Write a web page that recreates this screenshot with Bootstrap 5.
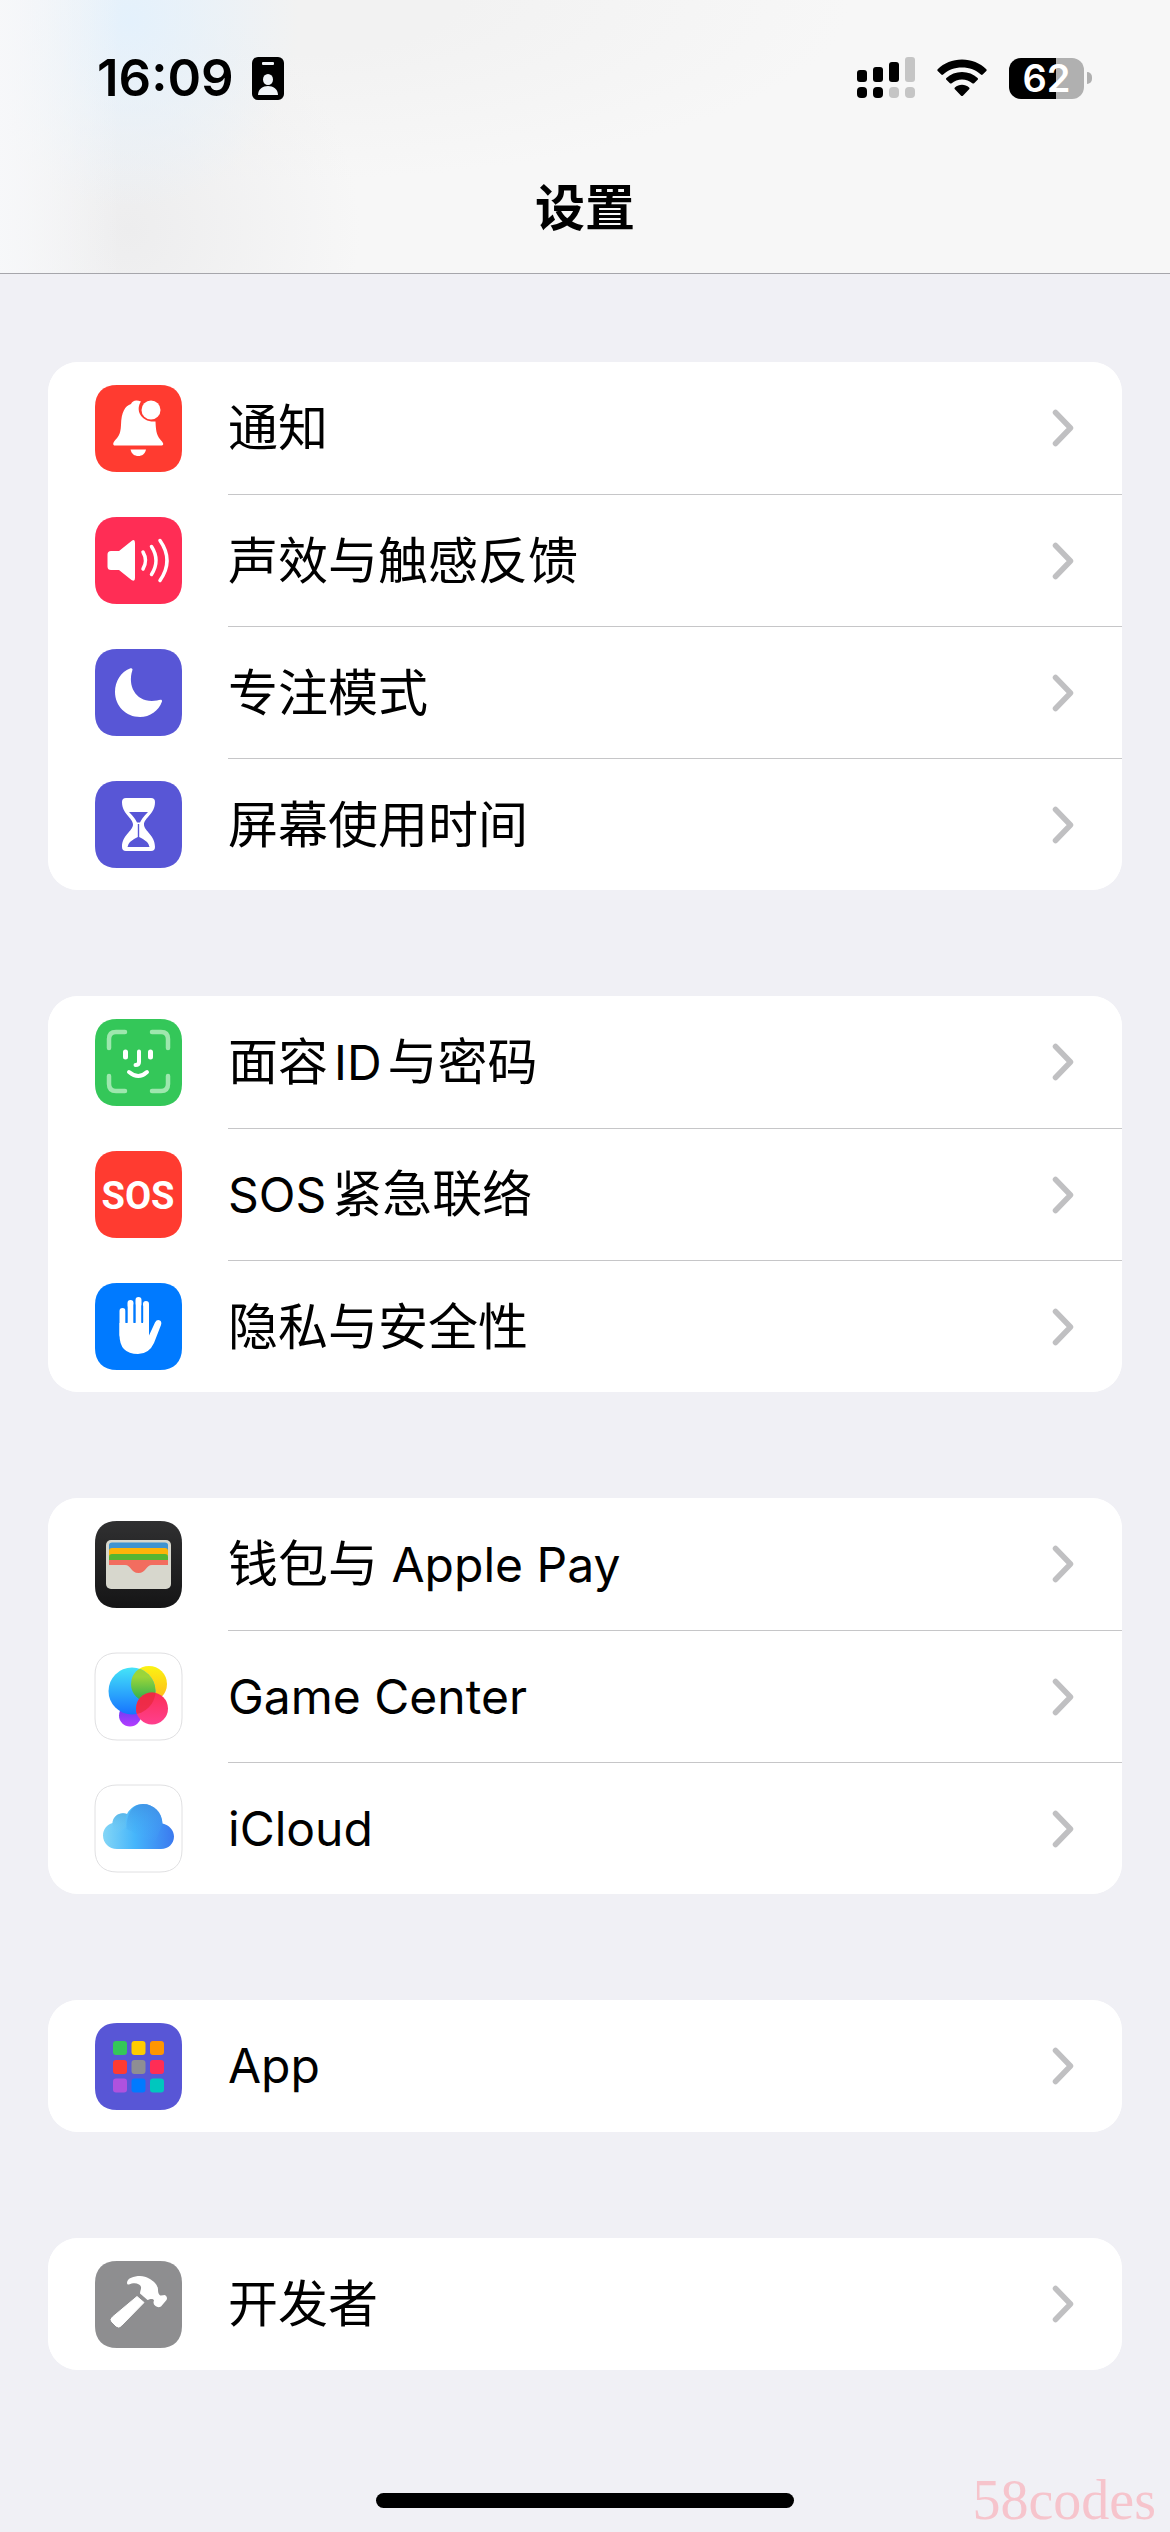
<!DOCTYPE html>
<html lang="zh-CN">
<head>
<meta charset="utf-8">
<meta name="viewport" content="width=device-width, initial-scale=1">
<title>设置</title>
<link href="https://cdn.jsdelivr.net/npm/bootstrap@5.3.0/dist/css/bootstrap.min.css" rel="stylesheet">
<style>
  body { font-family: Inter, "Noto Sans CJK SC", sans-serif; background: #f0f0f5; color: #000; }
  .topbar {
    background:
      linear-gradient(90deg, rgba(247,248,250,.95) 0, rgba(247,247,247,0) 120px),
      radial-gradient(ellipse 170px 190px at 130px 20px, #e4f1fc 0, rgba(228,241,252,0) 100%),
      radial-gradient(ellipse 230px 240px at 130px 230px, #ededee 0, rgba(237,237,238,0) 100%),
      radial-gradient(ellipse 560px 180px at 290px 0, #f2f2f2 30%, rgba(242,242,242,0) 100%),
      #f7f7f7;
    border-bottom: 1px solid #a6a6ab;
  }
  .statusbar { height: 156px; padding: 0 78px 0 97px; }
  .status-left { gap: 18px; }
  .status-right { gap: 22px; }
  .clock { font-size: 51px; font-weight: 600; line-height: 60px; }
  .battery-body { width: 75px; height: 41px; border-radius: 12px; background: linear-gradient(90deg, #000 47px, #b0b0b0 47px); color: #fff; font-size: 38px; font-weight: 600; line-height: 41px; }
  .battery-nub { width: 5px; height: 12px; margin-left: 3px; border-radius: 0 6px 6px 0; background: #b0b0b0; }
  .navtitle { font-size: 50px; font-weight: 600; line-height: 72px; margin: 0; padding: 16px 0 29px; }
  main { padding: 88px 48px 0; }
  .settings-group { border-radius: 30px; background: #fff; margin-bottom: 106px; overflow: hidden; }
  .settings-row { height: 132px; padding: 0 0 0 47px; background: #fff; color: #000; font-size: 50px; line-height: 74px; border: 0; gap: 46px; }
  .settings-row:hover, .settings-row:focus { color: #000; background: #fff; }
  .row-body { padding-right: 47px; }
  .settings-row + .settings-row .row-body { border-top: 1px solid #c6c6c8; }
  .latin { font-size: 48px; }
  .latin-before { margin-left: 6px; }
  .latin-after { margin-right: 6px; }
  .homebar { width: 418px; height: 15px; border-radius: 8px; background: #000; }
  footer { height: 56px; padding-top: 17px; }
  .stamp { right: 14px; bottom: 0; font-family: "Liberation Serif", serif; font-size: 56px; line-height: 64px; color: #f6c4cc; }
</style>
</head>
<body>
<header class="topbar">
  <div class="statusbar d-flex align-items-center justify-content-between">
    <div class="status-left d-flex align-items-center">
      <span class="clock">16:09</span>
      <svg width="32" height="43" viewBox="0 0 32 43" role="img" aria-label="ID"><rect width="32" height="43" rx="6"/><rect x="10" y="5" width="12" height="3" rx="1" fill="#f0f4f8"/><ellipse cx="16" cy="22.500" rx="5" ry="5.500" fill="#f0f4f8"/><path d="M6 38c0-6 5-9 10-9s10 3 10 9z" fill="#f0f4f8"/></svg>
    </div>
    <div class="status-right d-flex align-items-center">
      <svg width="58" height="42" viewBox="0 0 58 42" role="img" aria-label="signal"><rect y="13" width="10" height="12" rx="3"/><rect x="16" y="10" width="10" height="15" rx="3"/><rect x="32" y="5" width="10" height="20" rx="3"/><rect x="48" width="10" height="25" rx="3" fill="#c5c5c5"/><rect y="30" width="10" height="11" rx="4"/><rect x="16" y="30" width="10" height="11" rx="4"/><rect x="32" y="30" width="10" height="11" rx="4" fill="#c5c5c5"/><rect x="48" y="30" width="10" height="11" rx="4" fill="#c5c5c5"/></svg>
      <svg width="50" height="38" viewBox="0 0 50 38" role="img" aria-label="Wi-Fi"><path d="M0.700 10.200C7 4 15.500 0.500 25 0.500s18 3.500 24.300 9.700q.8.900 0 1.800l-3.600 3.600q-.9.800-1.800 0C39 11 32.500 8.500 25 8.500S11 11 6.100 15.600q-.9.800-1.800 0L.7 12q-.8-.9 0-1.800zM9.400 19C13.500 15 19 13 25 13s11.500 2 15.600 6q.8.900 0 1.800l-3.500 3.400q-.9.800-1.800 0C32.500 21.700 29 20.400 25 20.400s-7.500 1.300-10.300 3.800q-.9.800-1.800 0l-3.500-3.400q-.8-.9 0-1.800zM17.900 28.500c2-1.900 4.500-2.800 7.100-2.800s5.100.9 7.100 2.800q.8.900 0 1.800l-6.200 6.400q-.9.800-1.800 0l-6.200-6.400q-.8-.9 0-1.800z"/></svg>
      <div class="d-flex align-items-center"><div class="battery-body text-center">62</div><div class="battery-nub"></div></div>
    </div>
  </div>
  <h1 class="navtitle text-center">设置</h1>
</header>

<svg width="0" height="0" class="d-block" aria-hidden="true">
  <defs>
    <symbol id="chev" viewBox="0 0 22 38"><path d="M3.500 3.500 18.500 19 3.500 34.500" fill="none" stroke="#c0c0c2" stroke-width="5.500" stroke-linecap="round" stroke-linejoin="round"/></symbol>
    <path id="tile" d="M22 0H65C79 0 87 8 87 22V65C87 79 79 87 65 87H22C8 87 0 79 0 65V22C0 8 8 0 22 0Z"/>
    <linearGradient id="wal" x2="0" y2="1"><stop stop-color="#303031"/><stop offset="1" stop-color="#151516"/></linearGradient>
    <linearGradient id="gblue" x2="0" y2="1"><stop stop-color="#45e4f8"/><stop offset="1" stop-color="#1673ff"/></linearGradient>
    <linearGradient id="gyel" x2="0" y2="1"><stop stop-color="#fbf313"/><stop offset="1" stop-color="#ffb51c"/></linearGradient>
    <linearGradient id="ggrn" x2="0" y2="1"><stop offset=".2" stop-color="#9bd53a"/><stop offset=".8" stop-color="#17a653"/></linearGradient>
    <linearGradient id="gpink" x2="0" y2="1"><stop stop-color="#fb2f55"/><stop offset="1" stop-color="#ff3f8e"/></linearGradient>
    <linearGradient id="gpur" x2="0" y2="1"><stop stop-color="#5a3df0"/><stop offset="1" stop-color="#b53cff"/></linearGradient>
    <linearGradient id="icl"><stop stop-color="#84d6f6"/><stop offset=".45" stop-color="#45b5fb"/><stop offset="1" stop-color="#3b79ef"/></linearGradient>
    <linearGradient id="icl2" x2="0" y2="1"><stop stop-color="#3f8fe0"/><stop offset="1" stop-color="#46b4fb" stop-opacity="0"/></linearGradient>
    <linearGradient id="icl3" x2="0" y2="1"><stop stop-color="#58b2e2"/><stop offset="1" stop-color="#7cd0f6" stop-opacity="0"/></linearGradient>
    <clipPath id="gyc"><circle cx="54" cy="31" r="18"/></clipPath>
    <clipPath id="gbc"><circle cx="37" cy="38" r="23.500"/></clipPath>
  </defs>
</svg>

<main>
  <nav class="settings-group list-group list-group-flush">
    <a href="#" class="settings-row list-group-item list-group-item-action d-flex align-items-stretch">
      <svg class="align-self-center flex-shrink-0" width="87" height="87" viewBox="0 0 87 87" aria-hidden="true"><use href="#tile" fill="#ff3b30"/><path d="M20 60.500C17.500 60.500 18 58 19.500 56 23 52 25.500 50 26 40 26.300 27 30 21 36 19 37.500 15.500 41 14.500 46 16.500 40 25 46 37.500 60.500 36.500 61 48 62 51 67 56.500 69 59 68.500 60.500 66 60.500Z" fill="#fff"/><path d="M35.500 64.500h15.500c-1 4.500-4 6.500-7.700 6.500s-6.800-2-7.800-6.500z" fill="#fff"/><circle cx="56" cy="25" r="9.500" fill="#fff"/></svg>
      <span class="row-body flex-grow-1 d-flex align-items-center justify-content-between"><span>通知</span><svg width="24" height="38"><use href="#chev"/></svg></span>
    </a>
    <a href="#" class="settings-row list-group-item list-group-item-action d-flex align-items-stretch">
      <svg class="align-self-center flex-shrink-0" width="87" height="87" viewBox="0 0 87 87" aria-hidden="true"><use href="#tile" fill="#ff2d55"/><path d="M16 34H24L36.500 24Q40 21.500 40 26V61Q40 65 36.500 63L24 53H16Q12.500 53 12.500 49.500V37.500Q12.500 34 16 34Z" fill="#fff"/><path d="M48 35q5 8.500 0 17M56.500 29.500q9 14 0 28M65 23.500q14 20 0 40" fill="none" stroke="#fff" stroke-width="3.500" stroke-linecap="round"/></svg>
      <span class="row-body flex-grow-1 d-flex align-items-center justify-content-between"><span>声效与触感反馈</span><svg width="24" height="38"><use href="#chev"/></svg></span>
    </a>
    <a href="#" class="settings-row list-group-item list-group-item-action d-flex align-items-stretch">
      <svg class="align-self-center flex-shrink-0" width="87" height="87" viewBox="0 0 87 87" aria-hidden="true"><use href="#tile" fill="#5856d6"/><path d="M35 19.500C37 18.800 38 20 37.300 21.500 32 38 42 55 62 51.500 65 50.500 67.500 50 67 52.500 63.500 62 55 68 45 68 31 68 20 57 20 43 20 32 26 23 35 19.500Z" fill="#fff"/></svg>
      <span class="row-body flex-grow-1 d-flex align-items-center justify-content-between"><span>专注模式</span><svg width="24" height="38"><use href="#chev"/></svg></span>
    </a>
    <a href="#" class="settings-row list-group-item list-group-item-action d-flex align-items-stretch">
      <svg class="align-self-center flex-shrink-0" width="87" height="87" viewBox="0 0 87 87" aria-hidden="true"><use href="#tile" fill="#5856d6"/><path d="M31 17H56Q60 17 60 21C60 33 49 37 49 43.500S60 54 60 66Q60 70 56 70H31Q27 70 27 66C27 54 38 50 38 43.500S27 33 27 21Q27 17 31 17Z" fill="#fff"/><path d="M34 31H53Q47 37 45 41.500H42Q40 37 34 31ZM42.800 43h1.400V56Q54 60.500 54.500 66H32.500Q33 60.500 42.800 56Z" fill="#5856d6"/></svg>
      <span class="row-body flex-grow-1 d-flex align-items-center justify-content-between"><span>屏幕使用时间</span><svg width="24" height="38"><use href="#chev"/></svg></span>
    </a>
  </nav>

  <nav class="settings-group list-group list-group-flush">
    <a href="#" class="settings-row list-group-item list-group-item-action d-flex align-items-stretch">
      <svg class="align-self-center flex-shrink-0" width="87" height="87" viewBox="0 0 87 87" aria-hidden="true"><use href="#tile" fill="#34c759"/><path d="M14 29V20Q14 13 21 13H30M57 13H66Q73 13 73 20V29M73 57V65Q73 72 66 72H57M30 72H21Q14 72 14 65V57" fill="none" stroke="#9ee7ae" stroke-width="4.500" stroke-linecap="round"/><path d="M30.500 33V38M55.500 33V38" stroke="#fff" stroke-width="5" stroke-linecap="round"/><path d="M44 32.500V43Q44 46 40.500 46M34 53Q43.500 61 52 53" fill="none" stroke="#fff" stroke-width="4" stroke-linecap="round"/></svg>
      <span class="row-body flex-grow-1 d-flex align-items-center justify-content-between"><span>面容<span class="latin latin-before latin-after">ID</span>与密码</span><svg width="24" height="38"><use href="#chev"/></svg></span>
    </a>
    <a href="#" class="settings-row list-group-item list-group-item-action d-flex align-items-stretch">
      <svg class="align-self-center flex-shrink-0" width="87" height="87" viewBox="0 0 87 87" aria-hidden="true"><use href="#tile" fill="#ff3b30"/><text x="43" y="58" text-anchor="middle" font-family="'Liberation Sans Narrow', Roboto, sans-serif" font-weight="700" font-size="38" fill="#fff">SOS</text></svg>
      <span class="row-body flex-grow-1 d-flex align-items-center justify-content-between"><span><span class="latin latin-after">SOS</span>紧急联络</span><svg width="24" height="38"><use href="#chev"/></svg></span>
    </a>
    <a href="#" class="settings-row list-group-item list-group-item-action d-flex align-items-stretch">
      <svg class="align-self-center flex-shrink-0" width="87" height="87" viewBox="0 0 87 87" aria-hidden="true"><use href="#tile" fill="#007aff"/><path d="M27.500 28V52M35.500 20V45M43.500 17V45M51 21V45" stroke="#fff" stroke-width="6" stroke-linecap="round"/><path d="M24.500 40H54V52.500L60 39.500Q62 36 65 37.500 67 39 66 42L59 60Q54 71 43 71 24.500 71 24.500 52Z" fill="#fff"/><path d="M31.500 24V39M39.500 22V39M47.300 23V39" stroke="#007aff" stroke-width="1.800" stroke-linecap="round"/></svg>
      <span class="row-body flex-grow-1 d-flex align-items-center justify-content-between"><span>隐私与安全性</span><svg width="24" height="38"><use href="#chev"/></svg></span>
    </a>
  </nav>

  <nav class="settings-group list-group list-group-flush">
    <a href="#" class="settings-row list-group-item list-group-item-action d-flex align-items-stretch">
      <svg class="align-self-center flex-shrink-0" width="87" height="87" viewBox="0 0 87 87" aria-hidden="true"><use href="#tile" fill="url(#wal)"/><rect x="11" y="19" width="65" height="49" rx="5" fill="#d7d7cd"/><path d="M14 30V24q0-2.500 3-2.500H70q3 0 3 2.500v6z" fill="#3f94d1"/><path d="M14 35v-5q0-3 3-3H70q3 0 3 3v5z" fill="#fdb409"/><path d="M14 40v-4q0-3 3-3H70q3 0 3 3v4z" fill="#55b532"/><path d="M14 44v-5H73v5H57C51 44 51 52 43.500 52S36 44 30 44z" fill="#f26d5f"/></svg>
      <span class="row-body flex-grow-1 d-flex align-items-center justify-content-between"><span>钱包与<span class="latin"> Apple Pay</span></span><svg width="24" height="38"><use href="#chev"/></svg></span>
    </a>
    <a href="#" class="settings-row list-group-item list-group-item-action d-flex align-items-stretch">
      <svg class="align-self-center flex-shrink-0 overflow-visible" width="87" height="87" viewBox="0 0 87 87" aria-hidden="true"><use href="#tile" fill="#fff" stroke="#e0e0e2"/><circle cx="35" cy="62.500" r="11" fill="url(#gpur)"/><circle cx="54" cy="31" r="18" fill="url(#gyel)"/><circle cx="37" cy="38" r="23.500" fill="url(#gblue)"/><circle cx="37" cy="38" r="23.500" fill="url(#ggrn)" clip-path="url(#gyc)"/><circle cx="57" cy="55.500" r="16" fill="url(#gpink)"/><circle cx="57" cy="55.500" r="16" fill="#e8283a" fill-opacity=".7" clip-path="url(#gbc)"/></svg>
      <span class="row-body flex-grow-1 d-flex align-items-center justify-content-between"><span class="latin">Game Center</span><svg width="24" height="38"><use href="#chev"/></svg></span>
    </a>
    <a href="#" class="settings-row list-group-item list-group-item-action d-flex align-items-stretch">
      <svg class="align-self-center flex-shrink-0 overflow-visible" width="87" height="87" viewBox="0 0 87 87" aria-hidden="true"><use href="#tile" fill="#fff" stroke="#e0e0e2"/><path d="M22 64C14 64 8 58 8 50.500 8 44.500 12 39.500 17.500 38 18 31 25 26.500 32 29 35 23 41 19 48 19 58.500 19 67 27 67.500 38.500 74 40 79 45 79 51.500 79 58.500 73.500 64 66 64Z" fill="url(#icl)"/><path d="M17.500 38C18 31 25 26.500 32 29Q29.500 34 31.500 42L20 50Z" fill="url(#icl3)" fill-opacity=".7"/><path d="M31.500 44C31 30 37 19 48 19 58.500 19 67 27 67.500 38.500L60 58Z" fill="url(#icl2)" fill-opacity=".7"/></svg>
      <span class="row-body flex-grow-1 d-flex align-items-center justify-content-between"><span class="latin">iCloud</span><svg width="24" height="38"><use href="#chev"/></svg></span>
    </a>
  </nav>

  <nav class="settings-group list-group list-group-flush">
    <a href="#" class="settings-row list-group-item list-group-item-action d-flex align-items-stretch">
      <svg class="align-self-center flex-shrink-0" width="87" height="87" viewBox="0 0 87 87" aria-hidden="true"><use href="#tile" fill="#5856d6"/><rect x="18" y="18" width="14" height="14" rx="3" fill="#34c759"/><rect x="36.500" y="18" width="14" height="14" rx="3" fill="#ffcc00"/><rect x="55" y="18" width="14" height="14" rx="3" fill="#ff9500"/><rect x="18" y="37" width="14" height="14" rx="3" fill="#ff3b30"/><rect x="36.500" y="37" width="14" height="14" rx="3" fill="#8e8e93"/><rect x="55" y="37" width="14" height="14" rx="3" fill="#ff2d55"/><rect x="18" y="55.500" width="14" height="14" rx="3" fill="#af52de"/><rect x="36.500" y="55.500" width="14" height="14" rx="3" fill="#007aff"/><rect x="55" y="55.500" width="14" height="14" rx="3" fill="#00c7be"/></svg>
      <span class="row-body flex-grow-1 d-flex align-items-center justify-content-between"><span class="latin">App</span><svg width="24" height="38"><use href="#chev"/></svg></span>
    </a>
  </nav>

  <nav class="settings-group list-group list-group-flush">
    <a href="#" class="settings-row list-group-item list-group-item-action d-flex align-items-stretch">
      <svg class="align-self-center flex-shrink-0" width="87" height="87" viewBox="0 0 87 87" aria-hidden="true"><use href="#tile" fill="#8e8e90"/><path d="M42 35.500 49 41.500 26.500 64.500Q24 67.500 21 65L17 61Q14.500 58.500 17.500 56Z" fill="#fff" stroke="#fff" stroke-linejoin="round"/><path d="M32 22C32 17 39 15 45 15 52 15 57 19 60 22Q63 25 63 28.500C63 32 64 34.500 66 34.500L70 34Q73 36 71.500 39L66 45.500Q63 47 60.500 45Q57.500 43 59 39.500C58 37 55 38 52.500 39L45 32.500C45 29 48 26 44 23.500C40.500 21.500 37 22.500 34 23.500Q32 24 32 22Z" fill="#fff"/></svg>
      <span class="row-body flex-grow-1 d-flex align-items-center justify-content-between"><span>开发者</span><svg width="24" height="38"><use href="#chev"/></svg></span>
    </a>
  </nav>
</main>

<footer class="position-relative">
  <div class="homebar mx-auto"></div>
  <span class="stamp position-absolute">58codes</span>
</footer>
<script src="https://cdn.jsdelivr.net/npm/bootstrap@5.3.0/dist/js/bootstrap.bundle.min.js"></script>
</body>
</html>
